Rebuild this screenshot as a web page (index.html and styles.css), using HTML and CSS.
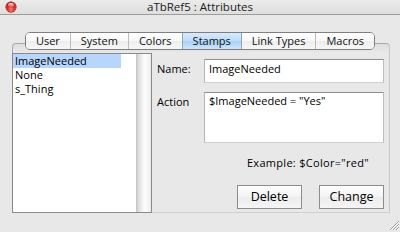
FILE: index.html
```html
<!DOCTYPE html>
<html>
<head>
<meta charset="utf-8">
<link rel="stylesheet" href="styles.css">
</head>
<body>
<div class="window">
  <header class="titlebar">
    <span class="close"></span>
    <span class="title">aTbRef5 : Attributes</span>
    <span></span>
  </header>
  <div class="content">
    <nav class="tabs">
      <span class="tab">User</span>
      <span class="tab">System</span>
      <span class="tab">Colors</span>
      <span class="tab active">Stamps</span>
      <span class="tab">Link Types</span>
      <span class="tab">Macros</span>
    </nav>
    <section class="pane">
      <div class="list">
        <ul class="items">
          <li class="item selected">ImageNeeded</li>
          <li class="item">None</li>
          <li class="item">s_Thing</li>
        </ul>
        <div class="scrollbar"></div>
      </div>
      <div class="form">
        <div class="fields">
          <span class="label">Name:</span>
          <div class="field">ImageNeeded</div>
          <span class="label">Action</span>
          <div class="field area">$ImageNeeded = "Yes"</div>
        </div>
        <p class="example">Example: $Color="red"</p>
        <div class="buttons">
          <button class="btn">Delete</button>
          <button class="btn">Change</button>
        </div>
      </div>
    </section>
    <div class="grip">
      <svg width="10" height="10" viewBox="0 0 10 10">
        <path d="M1 10 L10 1 M4 10 L10 4 M7 10 L10 7" stroke="#9a9a9a" stroke-width="1" fill="none"/>
        <path d="M2 10 L10 2 M5 10 L10 5 M8 10 L10 8" stroke="#ffffff" stroke-width="1" fill="none"/>
      </svg>
    </div>
  </div>
</div>
</body>
</html>
```
FILE: styles.css
```css
* { box-sizing: border-box; margin: 0; padding: 0; }
html, body { width: 400px; height: 232px; overflow: hidden; }
body {
  background: #e8e8e8;
  font-family: "Open Sans", "DejaVu Sans", sans-serif;
  font-size: 11px;
  color: #000;
}
.titlebar {
  height: 15px;
  border-bottom: 1px solid #9c9c9c;
  background: linear-gradient(#ebebeb, #dedede);
  display: grid;
  grid-template-columns: 1fr auto 1fr;
  align-items: start;
}
.close {
  width: 10px;
  height: 10px;
  margin: 2px 0 0 6px;
  border-radius: 50%;
  background: radial-gradient(circle at 50% 72%, #ff8074 0, #e52a1f 40%, #a80f0b 85%, #7b0605 100%);
  box-shadow: 0 0 0 0.5px #6d0b08;
  position: relative;
}
.close::after {
  content: "";
  position: absolute;
  left: 2px;
  top: 1px;
  width: 6px;
  height: 4px;
  border-radius: 50%;
  background: linear-gradient(rgba(255,255,255,0.9), rgba(255,255,255,0.1));
}
.title {
  font-size: 11.5px;
  line-height: 14px;
  color: #1a1a1a;
}
.content { padding-top: 17px; }
.tabs {
  display: flex;
  width: max-content;
  margin: 0 auto;
  border: 1px solid #7f7f7f;
  border-radius: 5px;
  overflow: hidden;
  position: relative;
  z-index: 1;
}
.tab {
  padding: 0 10px;
  line-height: 16px;
  color: #111;
  background: linear-gradient(#ffffff, #f8f8f8 50%, #ededed 51%, #f7f7f7);
  border-left: 1px solid #bcbcbc;
}
.tab:first-child { border-left: 0; }
.tab.active {
  background: linear-gradient(#d6eafd, #bcdcfa 50%, #a6d0f7 51%, #cde6fd);
  border-left-color: #8fa6bd;
}
.tab.active + .tab { border-left-color: #8fa6bd; }
.pane {
  margin: -7px 0 0 12px;
  width: 378px;
  height: 170px;
  border: 1px solid;
  border-color: #a9a9a9 #c6c6c6 #d0d0d0 #a9a9a9;
  border-radius: 4px 4px 0 0;
  display: flex;
  background: linear-gradient(#dddddd, #e8e8e8 9px);
}
.list {
  width: 140px;
  margin: 9px 0 -1px -1px;
  border: 1px solid #8a8a8a;
  background: #fff;
  display: flex;
}
.items { flex: 1; list-style: none; }
.item {
  width: 108px;
  padding-left: 2px;
  line-height: 14px;
  white-space: nowrap;
}
.item.selected { background: #b6d6fd; }
.scrollbar {
  width: 15px;
  background: linear-gradient(to right, #c2c2c2, #d9d9d9 2px, #f1f1f1 6px, #fdfdfd 9px, #f6f6f6 12px, #ebebeb);
}
.form {
  flex: 1;
  padding: 15px 5px 0 5px;
}
.fields {
  display: grid;
  grid-template-columns: 47px 180px;
  row-gap: 9px;
}
.label { padding-top: 2px; line-height: 15px; }
.field {
  background: #fff;
  border: 1px solid;
  border-color: #8e8e8e #bdbdbd #d0d0d0 #b5b5b5;
  padding: 1px 4px;
  line-height: 15px;
  height: 24px;
  white-space: nowrap;
}
.field.area { height: 51px; padding-top: 0; }
.example {
  margin-top: 12px;
  text-align: right;
  padding-right: 15px;
  line-height: 15px;
  letter-spacing: 0.3px;
}
.buttons {
  display: flex;
  justify-content: flex-end;
  gap: 17px;
  margin-top: 15px;
}
.btn {
  width: 65px;
  height: 24px;
  border: 1px solid #8c8c8c;
  background: linear-gradient(#fdfdfd, #f4f4f4 50%, #ececec 51%, #f5f5f5);
  font-family: "Open Sans", "DejaVu Sans", sans-serif;
  font-size: 12.5px;
  line-height: 22px;
  color: #000;
  text-align: center;
}
.grip {
  display: flex;
  justify-content: flex-end;
  padding-right: 1px;
  margin-top: 7px;
}
.grip svg { display: block; }
```
